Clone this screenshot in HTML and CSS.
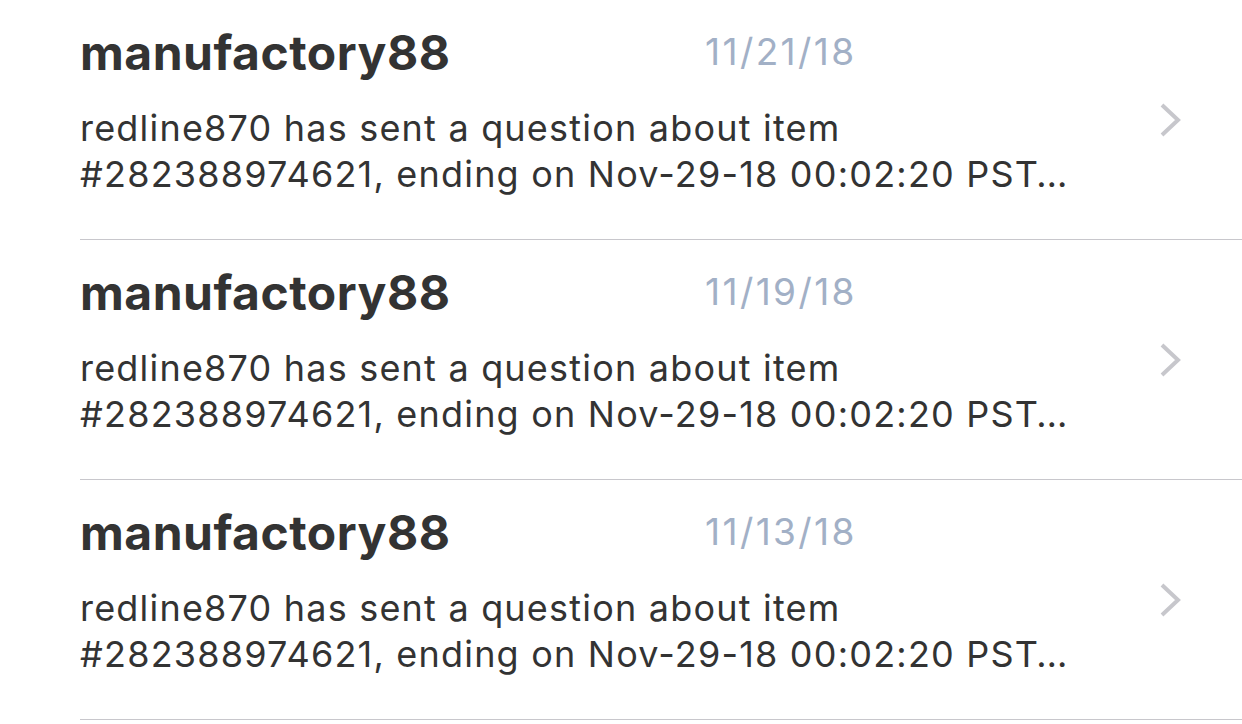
FILE: index.html
```html
<!DOCTYPE html>
<html>
<head>
  <meta charset="utf-8">
  <title>Messages</title>
  <link rel="stylesheet" href="styles.css">
</head>
<body>
  <div class="list">
    <div class="msg">
      <div class="msg-main">
        <div class="msg-head">
          <span class="sender">manufactory88</span>
          <span class="date">11/21/18</span>
        </div>
        <div class="preview">redline870 has sent a question about item<br>#282388974621, ending on Nov-29-18 00:02:20 PST…</div>
      </div>
      <svg class="chev" width="26" height="36" viewBox="0 0 26 36"><path d="M4 3 L20 18 L4 33" fill="none" stroke="#c7c7cc" stroke-width="4"/></svg>
    </div>
    <div class="msg">
      <div class="msg-main">
        <div class="msg-head">
          <span class="sender">manufactory88</span>
          <span class="date">11/19/18</span>
        </div>
        <div class="preview">redline870 has sent a question about item<br>#282388974621, ending on Nov-29-18 00:02:20 PST…</div>
      </div>
      <svg class="chev" width="26" height="36" viewBox="0 0 26 36"><path d="M4 3 L20 18 L4 33" fill="none" stroke="#c7c7cc" stroke-width="4"/></svg>
    </div>
    <div class="msg">
      <div class="msg-main">
        <div class="msg-head">
          <span class="sender">manufactory88</span>
          <span class="date">11/13/18</span>
        </div>
        <div class="preview">redline870 has sent a question about item<br>#282388974621, ending on Nov-29-18 00:02:20 PST…</div>
      </div>
      <svg class="chev" width="26" height="36" viewBox="0 0 26 36"><path d="M4 3 L20 18 L4 33" fill="none" stroke="#c7c7cc" stroke-width="4"/></svg>
    </div>
  </div>
</body>
</html>
```
FILE: styles.css
```css
body{margin:0;background:#fff;color:#333;font-family:Inter,"Noto Sans",sans-serif;}
.list{padding-left:80px;}
.msg{display:flex;align-items:center;height:239px;border-bottom:1px solid #c8c7cc;}
.msg-main{flex:1;align-self:flex-start;padding-top:24px;}
.msg-head{display:flex;align-items:flex-start;}
.sender{width:625px;font-size:48px;line-height:58px;font-weight:700;letter-spacing:0.5px;}
.date{margin-top:5px;font-size:37px;line-height:45px;letter-spacing:2.4px;color:#a2b0c6;}
.preview{font-size:36px;line-height:46px;letter-spacing:1.2px;margin-top:23px;}
.chev{margin-right:58px;}
```
